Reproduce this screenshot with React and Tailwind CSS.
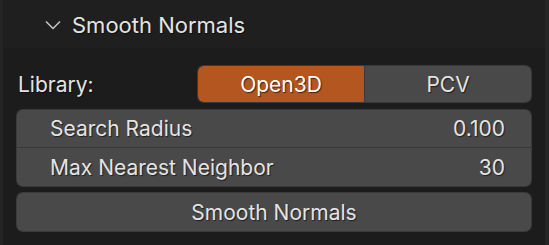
const shadow = '[text-shadow:1px_1px_1px_rgba(0,0,0,0.6)]'

function Field({ label, value, position }) {
  const rounded =
    position === 'top' ? 'rounded-t-[6px]' : position === 'bottom' ? 'rounded-b-[6px]' : 'rounded-[6px]'
  return (
    <div
      className={`flex h-[38px] items-center justify-between bg-[#494949] pl-[33px] pr-[26px] ${rounded} ${
        position === 'top' ? 'border-b border-[#383838]' : ''
      }`}
    >
      <span className={shadow}>{label}</span>
      <span className={shadow}>{value}</span>
    </div>
  )
}

export default function App() {
  return (
    <div
      className="flex h-[245px] w-[549px] bg-[#1c1c1c] text-[21px] leading-none text-[#e4e4e4]"
      style={{ fontFamily: 'Inter, "Noto Sans", sans-serif' }}
    >
      <div className="w-[3px] bg-[#242424]" />
      <div className="flex flex-1 flex-col">
        <div className="flex h-[48px] items-center bg-[#1f1f1f] pl-[42px]">
          <svg width="16" height="10" viewBox="0 0 16 10" className="mt-[1px]">
            <polyline points="1,1.5 8,8.5 15,1.5" fill="none" stroke="#c8c8c8" strokeWidth="1.5" />
          </svg>
          <span className={`ml-[11px] mt-[1px] text-[22px] ${shadow}`}>Smooth Normals</span>
        </div>
        <div className="flex flex-col pl-[13px] pr-[13px] pt-[17px]">
          <div className="flex h-[38px] items-center">
            <span className={`w-[181px] pl-[2px] ${shadow}`}>Library:</span>
            <div className="flex h-[38px] flex-1 rounded-[7px] bg-[#3a3a3a] p-[1px]">
              <div className={`flex flex-1 items-center justify-center rounded-l-[6px] bg-[#b3561f] text-white ${shadow}`}>
                Open3D
              </div>
              <div className="w-[1px]" />
              <div className={`flex flex-1 items-center justify-center rounded-r-[6px] bg-[#494949] ${shadow}`}>
                PCV
              </div>
            </div>
          </div>
          <div className="mt-[6px] rounded-[7px] bg-[#3a3a3a] p-[1px]">
            <Field label="Search Radius" value="0.100" position="top" />
            <Field label="Max Nearest Neighbor" value="30" position="bottom" />
          </div>
          <div className="mt-[5px] rounded-[7px] bg-[#3a3a3a] p-[1px]">
            <div className={`flex h-[38px] items-center justify-center rounded-[6px] bg-[#494949] ${shadow}`}>
              Smooth Normals
            </div>
          </div>
        </div>
      </div>
      <div className="w-[4px] bg-[#262626]" />
    </div>
  )
}
